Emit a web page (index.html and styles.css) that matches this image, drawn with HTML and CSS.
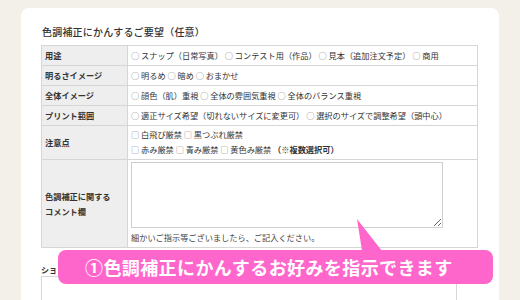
FILE: index.html
```html
<!DOCTYPE html>
<html lang="ja">
<head>
  <meta charset="UTF-8" />
  <meta name="viewport" content="width=device-width, initial-scale=1.0">
  <title>色調補正にかんするご要望</title>
  <link rel="stylesheet" href="styles.css">
</head>
<body>
  <div class="card">
    <h2 class="section-title">色調補正にかんするご要望（任意）</h2>

    <table class="order-table">
      <tr>
        <th>用途</th>
        <td><span class="mark">○</span> スナップ（日常写真） <span class="mark">○</span> コンテスト用（作品） <span class="mark">○</span> 見本（追加注文予定） <span class="mark">○</span> 商用</td>
      </tr>
      <tr>
        <th>明るさイメージ</th>
        <td><span class="mark">○</span> 明るめ <span class="mark">○</span> 暗め <span class="mark">○</span> おまかせ</td>
      </tr>
      <tr>
        <th>全体イメージ</th>
        <td><span class="mark">○</span> 顔色（肌）重視 <span class="mark">○</span> 全体の雰囲気重視 <span class="mark">○</span> 全体のバランス重視</td>
      </tr>
      <tr>
        <th>プリント範囲</th>
        <td><span class="mark">○</span> 適正サイズ希望（切れないサイズに変更可） <span class="mark">○</span> 選択のサイズで調整希望（頭中心）</td>
      </tr>
      <tr class="tall">
        <th>注意点</th>
        <td>
          <span class="mark">□</span> 白飛び厳禁 <span class="mark">□</span> 黒つぶれ厳禁<br>
          <span class="mark">□</span> 赤み厳禁 <span class="mark">□</span> 青み厳禁 <span class="mark">□</span> 黄色み厳禁 <strong>（※複数選択可）</strong>
        </td>
      </tr>
      <tr>
        <th>色調補正に関する<br>コメント欄</th>
        <td class="comment-cell">
          <textarea class="comment"></textarea>
          <p class="hint">細かいご指示等ございましたら、ご記入ください。</p>
        </td>
      </tr>
    </table>

    <p class="sub-label">ショ</p>
    <div class="message-box"></div>

    <div class="callout">①色調補正にかんするお好みを指示できます</div>
  </div>
</body>
</html>
```

FILE: styles.css
```css
/* Reset and base */
* {
  margin: 0;
  padding: 0;
  box-sizing: border-box;
}

body {
  font-family: "Noto Sans CJK JP", "Noto Sans", sans-serif;
  background: #f3efe9;
  color: #333;
  height: 300px;
  overflow: hidden;
}

.card {
  position: relative;
  width: 478px;
  height: 292px;
  margin: 8px auto 0;
  padding: 17px 21px 0 20px;
  background: #fff;
  border-radius: 8px 8px 0 0;
  overflow: hidden;
}

.section-title {
  font-size: 10px;
  font-weight: 500;
  line-height: 14px;
  padding-left: 1px;
  margin-bottom: 6px;
  letter-spacing: 0.2px;
}

.order-table {
  width: 437px;
  border-collapse: collapse;
  font-size: 8.2px;
  line-height: 15px;
}

.order-table th,
.order-table td {
  border: 1px solid #d6d6d6;
  padding: 2px 3px;
  text-align: left;
  vertical-align: middle;
  white-space: nowrap;
}

.order-table th {
  width: 86px;
  background: #eeeeee;
  font-weight: 700;
}

.order-table .tall td {
  padding: 1px 3px 2px;
}

.order-table strong {
  font-weight: 700;
}

.mark {
  color: #777;
}

.comment-cell {
  padding-top: 2px;
}

.comment {
  display: block;
  width: 312px;
  height: 66px;
  border: 1px solid #cfcfcf;
  resize: vertical;
  font-family: inherit;
}

.hint {
  margin-top: 2px;
  color: #444;
}

.sub-label {
  margin-top: 16px;
  font-size: 8px;
  line-height: 11px;
  font-weight: 700;
}

.message-box {
  width: 416px;
  height: 40px;
  margin-top: 1px;
  border: 1px solid #d6d6d6;
}

/* Pink callout over the form */
.callout {
  position: absolute;
  left: 37px;
  top: 242px;
  width: 435px;
  height: 34px;
  padding-left: 27px;
  background: #ff66cc;
  border-radius: 8px;
  color: #fff;
  font-size: 18px;
  font-weight: 700;
  line-height: 34px;
  letter-spacing: 0.4px;
  white-space: nowrap;
}

.callout::before {
  content: "";
  position: absolute;
  left: 299px;
  top: -31px;
  width: 25px;
  height: 32px;
  background: #ff66cc;
  clip-path: polygon(0 0, 20% 100%, 100% 100%);
}
```
